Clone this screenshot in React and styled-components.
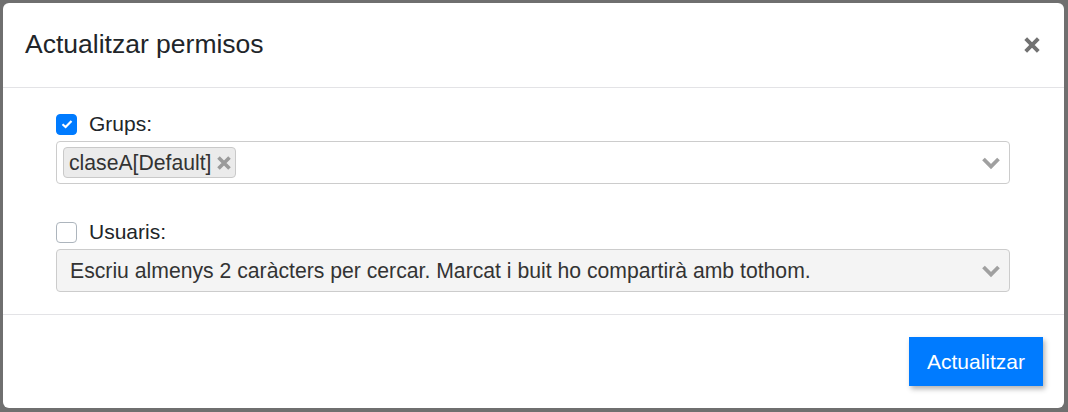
import React from "react";
import styled, { createGlobalStyle } from "styled-components";

const GlobalStyle = createGlobalStyle`
  html, body {
    margin: 0;
    padding: 0;
    background: #6f6f6f;
    font-family: "Liberation Sans", Arial, sans-serif;
    color: #212529;
  }
`;

const Backdrop = styled.div`
  width: 1068px;
  height: 412px;
  box-sizing: border-box;
  padding: 3px 4px 4px 3px;
  display: flex;
`;

const Modal = styled.div`
  flex: 1;
  background: #fff;
  border-radius: 6px;
  display: flex;
  flex-direction: column;
  overflow: hidden;
`;

const Header = styled.div`
  height: 84px;
  flex: 0 0 auto;
  display: flex;
  align-items: center;
  justify-content: space-between;
  padding: 0 24px 0 22px;
  border-bottom: 1px solid #e3e3e6;
`;

const Title = styled.h5`
  margin: 0;
  font-size: 26.5px;
  font-weight: 400;
  line-height: 1.5;
  color: #212529;
`;

const CloseButton = styled.button`
  border: 0;
  background: none;
  padding: 0;
  width: 16px;
  height: 16px;
  display: flex;
  align-items: center;
  justify-content: center;
  cursor: pointer;
`;

const Body = styled.div`
  flex: 1;
  padding: 23px 54px 0 53px;
  display: flex;
  flex-direction: column;
  gap: 35px;
`;

const FormGroup = styled.div`
  display: flex;
  flex-direction: column;
  gap: 4px;
`;

const LabelRow = styled.label`
  display: flex;
  align-items: center;
  gap: 12px;
  height: 26px;
  font-size: 21px;
  color: #212529;
`;

const Box = styled.span`
  width: 21px;
  height: 21px;
  box-sizing: border-box;
  border-radius: 4px;
  display: flex;
  align-items: center;
  justify-content: center;
  background: ${(p) => (p.$checked ? "#007bff" : "#fff")};
  border: 1px solid ${(p) => (p.$checked ? "#007bff" : "#adb5bd")};
`;

const Select = styled.div`
  height: 43px;
  box-sizing: border-box;
  border: 1px solid #cccccc;
  border-radius: 4px;
  background: ${(p) => (p.$disabled ? "#f4f4f4" : "#fff")};
  display: flex;
  align-items: center;
  padding: 0 8px 0 ${(p) => (p.$disabled ? "13px" : "6px")};
  font-size: 21.2px;
  color: #333;
`;

const SelectContent = styled.div`
  flex: 1;
  display: flex;
  align-items: center;
  white-space: nowrap;
  overflow: hidden;
`;

const Chip = styled.span`
  display: inline-flex;
  align-items: center;
  gap: 5px;
  height: 31px;
  box-sizing: border-box;
  padding: 0 4px 0 5px;
  background: #ebebeb;
  border: 1px solid #c9c9c9;
  border-radius: 4px;
  color: #333;
`;

const Footer = styled.div`
  flex: 0 0 auto;
  height: 94px;
  box-sizing: border-box;
  border-top: 1px solid #e3e3e6;
  display: flex;
  align-items: center;
  justify-content: flex-end;
  padding: 0 21px;
`;

const PrimaryButton = styled.button`
  font-family: "Liberation Sans", Arial, sans-serif;
  font-size: 21px;
  line-height: 1.5;
  color: #fff;
  background: #007bff;
  border: 1px solid #007bff;
  border-radius: 0;
  padding: 7.7px 17px;
  box-shadow: 2px 3px 5px rgba(0, 0, 0, 0.3);
  cursor: pointer;
`;

const Chevron = () => (
  <svg width="20" height="14" viewBox="0 0 20 14">
    <path d="M2.5 3 L10 10.5 L17.5 3" fill="none" stroke="#a0a0a0" strokeWidth="3.8" />
  </svg>
);

const Check = () => (
  <svg width="12" height="10" viewBox="0 0 12 10">
    <path d="M1.5 5.2 L4.6 8 L10.5 2" fill="none" stroke="#fff" strokeWidth="2.2" />
  </svg>
);

const Cross = ({ size = 14, color = "#999", width = 3.6 }) => (
  <svg width={size} height={size} viewBox="0 0 14 14">
    <path d="M1.5 1.5 L12.5 12.5 M12.5 1.5 L1.5 12.5" stroke={color} strokeWidth={width} />
  </svg>
);

export default function App() {
  return (
    <>
      <GlobalStyle />
      <Backdrop>
        <Modal>
          <Header>
            <Title>Actualitzar permisos</Title>
            <CloseButton aria-label="Close">
              <Cross size={16} color="#727272" width={3.4} />
            </CloseButton>
          </Header>
          <Body>
            <FormGroup>
              <LabelRow>
                <Box $checked>
                  <Check />
                </Box>
                Grups:
              </LabelRow>
              <Select>
                <SelectContent>
                  <Chip>
                    claseA[Default]
                    <Cross size={14} color="#9a9a9a" width={3.6} />
                  </Chip>
                </SelectContent>
                <Chevron />
              </Select>
            </FormGroup>
            <FormGroup>
              <LabelRow>
                <Box />
                Usuaris:
              </LabelRow>
              <Select $disabled>
                <SelectContent>
                  Escriu almenys 2 caràcters per cercar. Marcat i buit ho compartirà amb tothom.
                </SelectContent>
                <Chevron />
              </Select>
            </FormGroup>
          </Body>
          <Footer>
            <PrimaryButton>Actualitzar</PrimaryButton>
          </Footer>
        </Modal>
      </Backdrop>
    </>
  );
}
